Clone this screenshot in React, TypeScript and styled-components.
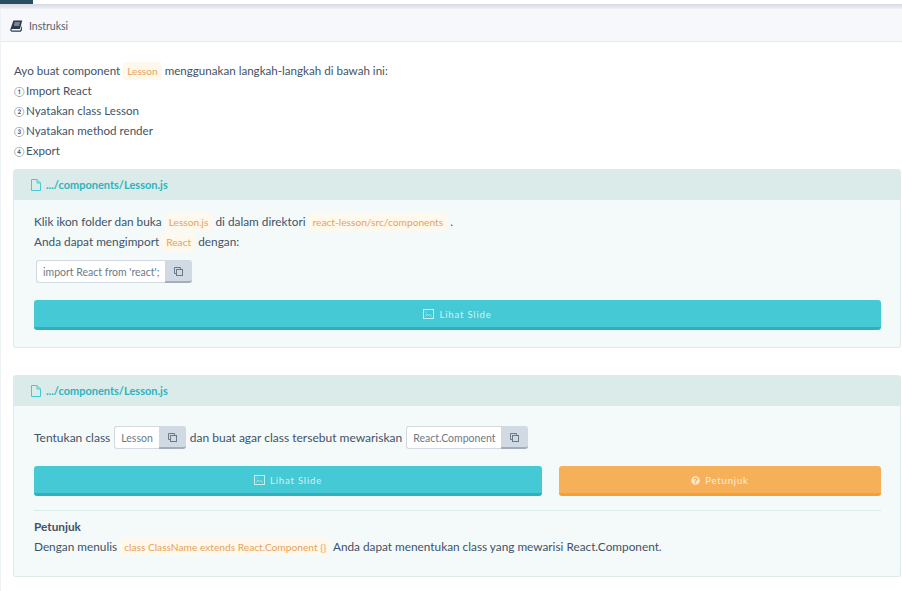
import React from 'react';
import styled, { createGlobalStyle } from 'styled-components';
import { FaQuestionCircle } from 'react-icons/fa';

const GlobalStyle = createGlobalStyle`
  html, body {
    margin: 0;
    padding: 0;
    background: #fff;
    overflow: hidden;
  }
  body {
    font-family: Lato, "DejaVu Sans", sans-serif;
    font-size: 11.8px;
    color: #3f5367;
  }
`;

const Page = styled.div`
  width: 902px;
  height: 591px;
  overflow: hidden;
  display: flex;
  flex-direction: column;
  background: #eef1f6;
`;

const TopBar = styled.div`
  height: 4px;
  flex: none;
  background: #fff;
`;

const ActiveTab = styled.div`
  width: 33px;
  height: 4px;
  background: #2b4d61;
`;

const TopShade = styled.div`
  height: 5px;
  flex: none;
  background: linear-gradient(#d5d9e2, #eef0f5);
`;

const Main = styled.div`
  flex: 1;
  margin-left: 1px;
  background: #fff;
`;

const CardHeader = styled.div`
  height: 33px;
  box-sizing: border-box;
  display: flex;
  align-items: center;
  gap: 6px;
  padding: 1px 0 0 9px;
  background: #f7f8fb;
  border-bottom: 1px solid #e6e9ef;
  border-top-left-radius: 3px;
  font-size: 10.5px;
  color: #556270;
`;

const Content = styled.div`
  padding: 19px 1px 0 12px;
`;

const Intro = styled.div`
  padding-left: 1px;
  font-size: 11.6px;
`;

const Line = styled.div`
  line-height: 20px;
  height: 20px;
  white-space: nowrap;
`;

const StepMark = styled.span`
  display: inline-block;
  width: 12px;
  font-size: 9.5px;
`;

const Code = styled.code`
  font-family: inherit;
  font-size: 10.2px;
  color: #e8a25a;
  background: #fff8ec;
  border-radius: 3px;
  padding: 3px 4px;
`;

const Panel = styled.section<{ $top: number }>`
  margin-top: ${({ $top }) => $top}px;
  background: #f4f9fa;
  border: 1px solid #dfeaeb;
  border-top: none;
  border-radius: 3px;
`;

const PanelHeader = styled.div`
  height: 31px;
  display: flex;
  align-items: center;
  gap: 5px;
  padding-left: 17px;
  background: #daebe9;
  border-radius: 3px 3px 0 0;
  font-size: 11px;
  font-weight: 700;
  color: #2eb3c0;
`;

const PanelBody = styled.div<{ $top: number; $bottom: number }>`
  padding: ${({ $top, $bottom }) => `${$top}px 19px ${$bottom}px 20px`};
`;

const InlineRow = styled.div<{ $top?: number }>`
  display: flex;
  align-items: center;
  gap: 4px;
  height: 23px;
  margin-top: ${({ $top }) => $top ?? 0}px;
  font-size: 12px;
  white-space: nowrap;
`;

const CopyField = styled.div<{ $indent?: number }>`
  display: inline-flex;
  height: 23px;
  margin-left: ${({ $indent }) => $indent ?? 0}px;
`;

const FieldText = styled.span`
  box-sizing: border-box;
  height: 23px;
  display: flex;
  align-items: center;
  padding: 0 6px;
  background: #fff;
  border: 1px solid #d3d9e2;
  border-right: none;
  border-radius: 3px 0 0 3px;
  font-size: 10.5px;
  color: #6d7a88;
`;

const CopyButton = styled.span`
  box-sizing: border-box;
  width: 27px;
  height: 23px;
  padding-top: 1px;
  display: flex;
  align-items: center;
  justify-content: center;
  background: #d1d9e2;
  border-bottom: 2px solid #a4adbb;
  border-radius: 0 3px 3px 0;
`;

const ActionRow = styled.div<{ $top: number }>`
  display: flex;
  gap: 17px;
  margin-top: ${({ $top }) => $top}px;
`;

const ActionButton = styled.button<{ $tone: 'teal' | 'orange'; $grow: number }>`
  flex: ${({ $grow }) => $grow} 1 0;
  height: 30px;
  padding: 1px 0 0;
  box-sizing: border-box;
  display: flex;
  align-items: center;
  justify-content: center;
  gap: 5px;
  border: none;
  border-radius: 3px;
  border-bottom: 3px solid ${({ $tone }) => ($tone === 'teal' ? '#2fb0bc' : '#f59f33')};
  background: ${({ $tone }) => ($tone === 'teal' ? '#45c9d5' : '#f7b05a')};
  color: #fff;
  font-family: inherit;
  font-size: 9.6px;
  letter-spacing: 0.8px;
`;

const ButtonLabel = styled.span`
  opacity: 0.75;
`;

const ButtonIcon = styled.span`
  display: flex;
  opacity: 0.7;
  font-size: 9px;
`;

const Divider = styled.hr`
  border: none;
  border-top: 1px solid #dcebeb;
  margin: 14px 0 6px;
`;

const HintTitle = styled.div`
  line-height: 20px;
  font-weight: 700;
`;

const BookIcon = () => (
  <svg width="13" height="12" viewBox="0 0 13 12">
    <path
      d="M3.4 0.5H12.2L10 9H2.4C1.6 9 1.3 9.5 1.5 10C1.6 10.4 2 10.6 2.5 10.6H10.4L12 5.2V10L10.8 11.7H2.4C1 11.7 0.2 10.7 0.3 9.4Z"
      fill="#2b3a4d"
    />
    <path d="M4.5 3H9.8M4 5H9.3" stroke="#f7f8fb" strokeWidth="0.8" />
  </svg>
);

const FileIcon = () => (
  <svg width="10" height="12" viewBox="0 0 10 12" fill="none" stroke="#45c9d5" strokeWidth="1">
    <path d="M0.5 0.5H6L9.5 4V11.5H0.5Z" />
    <path d="M6 0.5V4H9.5" />
  </svg>
);

const SlideIcon = () => (
  <svg width="11" height="10" viewBox="0 0 11 10" fill="none" stroke="#fff" strokeWidth="1">
    <rect x="0.5" y="0.5" width="10" height="9" />
    <path d="M2.5 7.5L4 5L5.5 6.5L7 5.5L8.5 7.5" strokeWidth="0.7" />
    <circle cx="3" cy="3" r="0.6" fill="#fff" stroke="none" />
  </svg>
);

const CopyIcon = () => (
  <svg width="9" height="9" viewBox="0 0 9 9" fill="none" stroke="#667a8c" strokeWidth="1">
    <path d="M2.5 6.5H0.5V0.5H6.5V2.5" />
    <rect x="2.5" y="2.5" width="6" height="6" />
  </svg>
);

const Field = ({ text, indent }: { text: string; indent?: number }) => (
  <CopyField $indent={indent}>
    <FieldText>{text}</FieldText>
    <CopyButton>
      <CopyIcon />
    </CopyButton>
  </CopyField>
);

type ActionProps = {
  tone: 'teal' | 'orange';
  grow: number;
  icon: React.ReactNode;
  label: string;
};

const Action = ({ tone, grow, icon, label }: ActionProps) => (
  <ActionButton $tone={tone} $grow={grow}>
    <ButtonIcon>{icon}</ButtonIcon>
    <ButtonLabel>{label}</ButtonLabel>
  </ActionButton>
);

const steps = ['Import React', 'Nyatakan class Lesson', 'Nyatakan method render', 'Export'];
const stepMarks = ['①', '②', '③', '④'];

const App = () => (
  <Page>
    <GlobalStyle />
    <TopBar>
      <ActiveTab />
    </TopBar>
    <TopShade />
    <Main>
      <CardHeader>
        <BookIcon />
        Instruksi
      </CardHeader>
      <Content>
        <Intro>
          <Line>
            Ayo buat component <Code>Lesson</Code> menggunakan langkah-langkah di bawah ini:
          </Line>
          {steps.map((step, index) => (
            <Line key={step}>
              <StepMark>{stepMarks[index]}</StepMark>
              {step}
            </Line>
          ))}
        </Intro>

        <Panel $top={8}>
          <PanelHeader>
            <FileIcon />
            .../components/Lesson.js
          </PanelHeader>
          <PanelBody $top={12} $bottom={17}>
            <Line>
              Klik ikon folder dan buka <Code>Lesson.js</Code> di dalam direktori{' '}
              <Code>react-lesson/src/components</Code> .
            </Line>
            <Line>
              Anda dapat mengimport <Code>React</Code> dengan:
            </Line>
            <InlineRow $top={8}>
              <Field text="import React from 'react';" indent={2} />
            </InlineRow>
            <ActionRow $top={17}>
              <Action tone="teal" grow={1} icon={<SlideIcon />} label="Lihat Slide" />
            </ActionRow>
          </PanelBody>
        </Panel>

        <Panel $top={27}>
          <PanelHeader>
            <FileIcon />
            .../components/Lesson.js
          </PanelHeader>
          <PanelBody $top={20} $bottom={19}>
            <InlineRow>
              Tentukan class <Field text="Lesson" /> dan buat agar class tersebut mewariskan{' '}
              <Field text="React.Component" />
            </InlineRow>
            <ActionRow $top={17}>
              <Action tone="teal" grow={508} icon={<SlideIcon />} label="Lihat Slide" />
              <Action tone="orange" grow={322} icon={<FaQuestionCircle />} label="Petunjuk" />
            </ActionRow>
            <Divider />
            <HintTitle>Petunjuk</HintTitle>
            <Line>
              Dengan menulis <Code>class ClassName extends React.Component {'{}'}</Code> Anda dapat menentukan class
              yang mewarisi React.Component.
            </Line>
          </PanelBody>
        </Panel>
      </Content>
    </Main>
  </Page>
);

export default App;
